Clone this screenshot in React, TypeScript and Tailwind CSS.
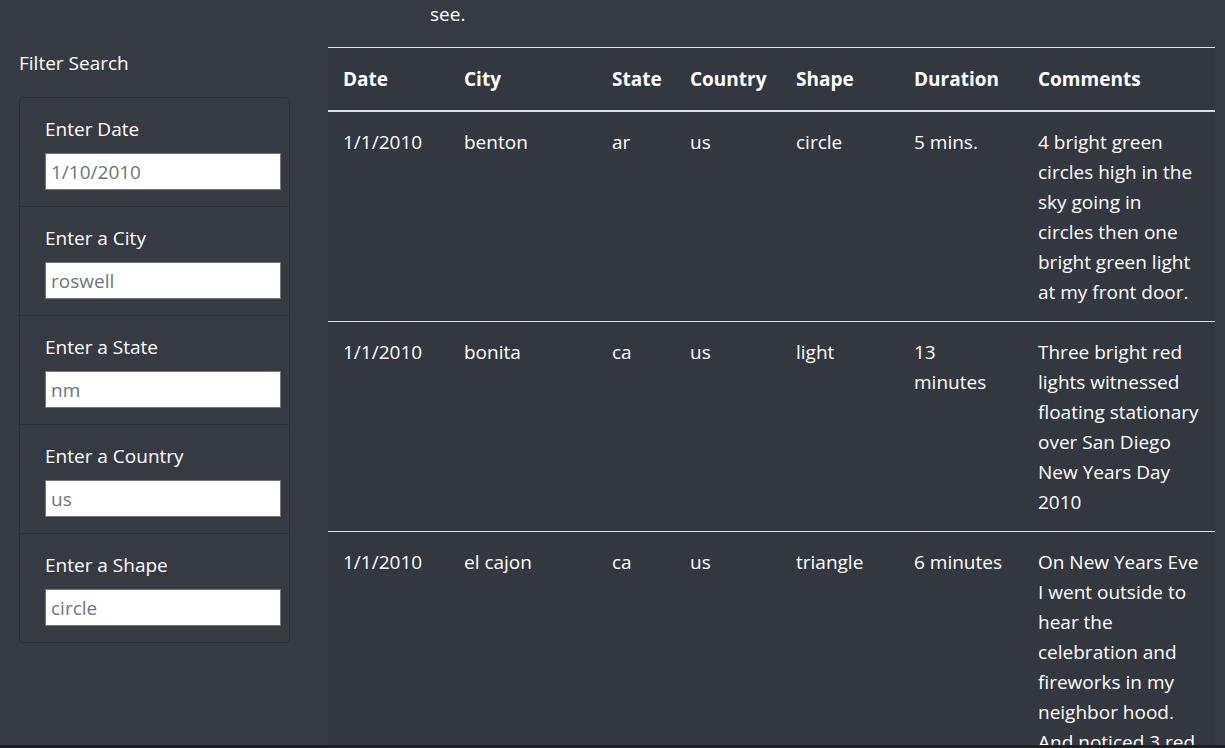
const sightings = [
  {
    date: '1/1/2010',
    city: 'benton',
    state: 'ar',
    country: 'us',
    shape: 'circle',
    duration: '5 mins.',
    comments: '4 bright green circles high in the sky going in circles then one bright green light at my front door.',
  },
  {
    date: '1/1/2010',
    city: 'bonita',
    state: 'ca',
    country: 'us',
    shape: 'light',
    duration: '13 minutes',
    comments: 'Three bright red lights witnessed floating stationary over San Diego New Years Day 2010',
  },
  {
    date: '1/1/2010',
    city: 'el cajon',
    state: 'ca',
    country: 'us',
    shape: 'triangle',
    duration: '6 minutes',
    comments: 'On New Years Eve I went outside to hear the celebration and fireworks in my neighbor hood. And noticed 3 red lights in a triangle formation moving slowly across the sky.',
  },
]

const filters = [
  {label: 'Enter Date', placeholder: '1/10/2010'},
  {label: 'Enter a City', placeholder: 'roswell'},
  {label: 'Enter a State', placeholder: 'nm'},
  {label: 'Enter a Country', placeholder: 'us'},
  {label: 'Enter a Shape', placeholder: 'circle'},
]

const headers = ['Date', 'City', 'State', 'Country', 'Shape', 'Duration', 'Comments']

export default function App() {
  return <>
    <div className="h-[748px] flex flex-col overflow-hidden bg-[#363b43] text-white text-[19px] leading-[30px] font-['Open_Sans','Noto_Sans',sans-serif]">
      <div className="flex-1 overflow-hidden">
        <div className="h-[47px] pl-[430px] -mt-px">
          <p>see.</p>
        </div>
        <div className="flex mt-px">
          <aside className="w-[328px] shrink-0 pl-[19px] pt-px">
            <h5 className="mb-[19px]">Filter Search</h5>
            <ul className="w-[271px] rounded border border-[#2c3036]">
              {filters.map((filter, index) => (
                <li key={index} className={`pl-[25px] pt-[16px] pb-[16px] ${index > 0 ? 'border-t border-[#2c3036]' : ''}`}>
                  <label className="block mb-[9px]">{filter.label}</label>
                  <input type="text" placeholder={filter.placeholder} className="block w-[236px] h-[37px] bg-white border border-[#767676] px-[5px] text-[19px] text-[#495057] placeholder:text-[#6c757d] outline-none"/>
                </li>
              ))}
            </ul>
          </aside>
          <div className="w-[887px] shrink-0 bg-[#33373f]">
            <table className="w-full table-fixed border-collapse text-left">
              <colgroup>
                <col className="w-[121px]"/>
                <col className="w-[148px]"/>
                <col className="w-[78px]"/>
                <col className="w-[106px]"/>
                <col className="w-[118px]"/>
                <col className="w-[124px]"/>
                <col className="w-[192px]"/>
              </colgroup>
              <thead>
              <tr className="border-t border-[#dee2e6]">
                {headers.map(header => (
                  <th key={header} className="px-[15px] pt-[16px] pb-[16px] font-bold border-b-2 border-[#dee2e6]">{header}</th>
                ))}
              </tr>
              </thead>
              <tbody>
              {sightings.map((s, index) => (
                <tr key={index} className="border-b border-[#dee2e6] align-top">
                  <td className="px-[15px] pt-[15px] pb-[14px]">{s.date}</td>
                  <td className="px-[15px] pt-[15px] pb-[14px]">{s.city}</td>
                  <td className="px-[15px] pt-[15px] pb-[14px]">{s.state}</td>
                  <td className="px-[15px] pt-[15px] pb-[14px]">{s.country}</td>
                  <td className="px-[15px] pt-[15px] pb-[14px]">{s.shape}</td>
                  <td className="px-[15px] pt-[15px] pb-[14px]">{s.duration}</td>
                  <td className="px-[15px] pt-[15px] pb-[14px]">{s.comments}</td>
                </tr>
              ))}
              </tbody>
            </table>
          </div>
        </div>
      </div>
      <div className="h-[3px] shrink-0 bg-[#1e1f20]"/>
    </div>
  </>
}
